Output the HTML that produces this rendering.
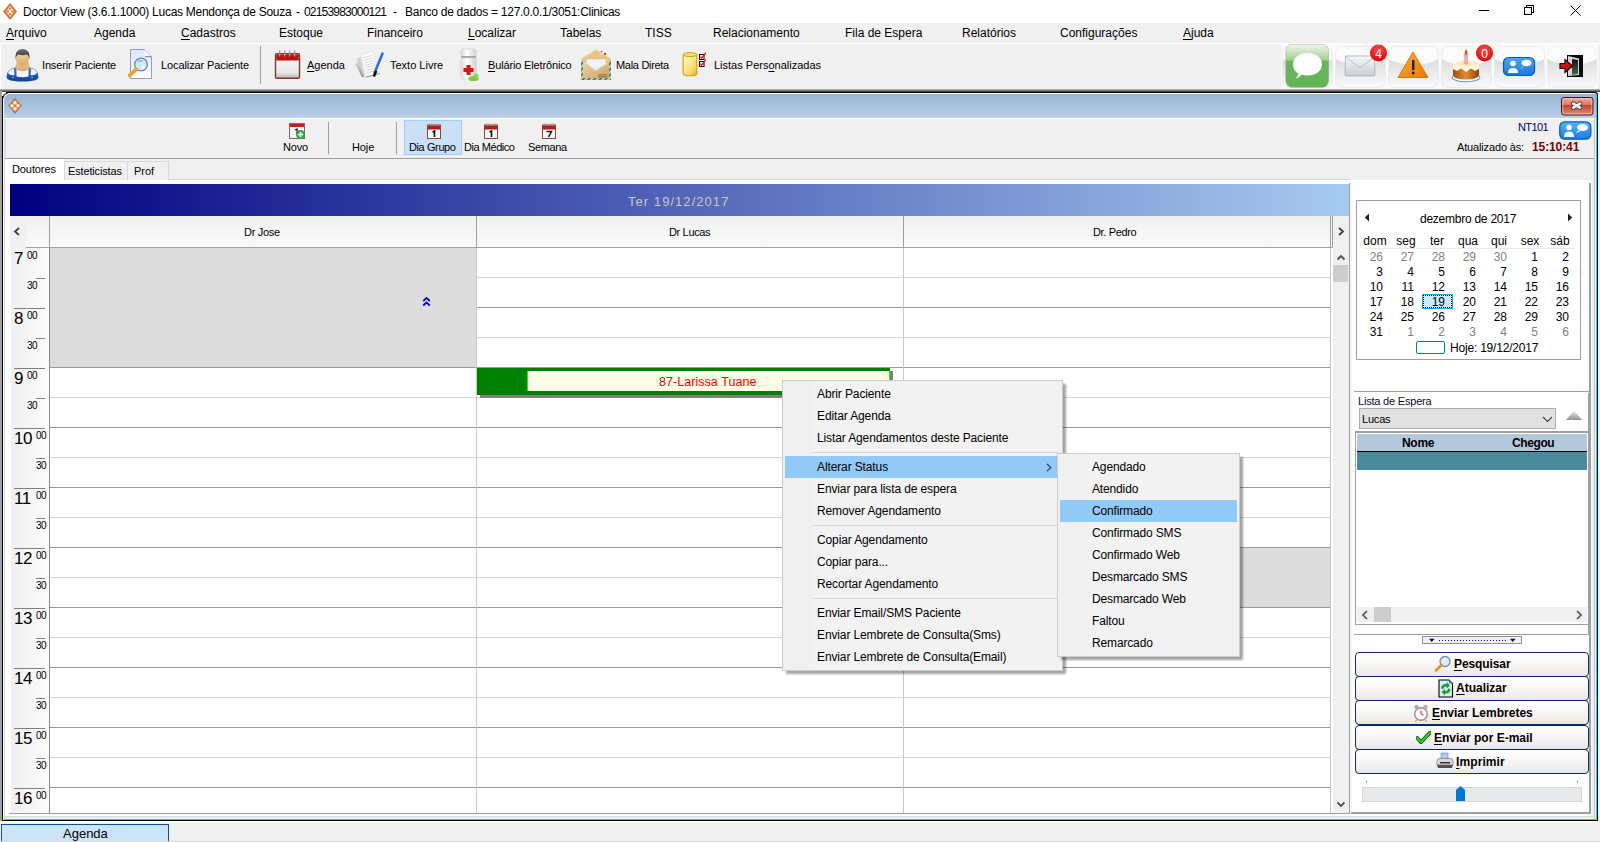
<!DOCTYPE html>
<html><head><meta charset="utf-8">
<style>
*{box-sizing:border-box}
html,body{margin:0;padding:0}
body{width:1600px;height:842px;overflow:hidden;position:relative;background:#f0f0f0;font-family:"Liberation Sans",sans-serif;font-size:12px;color:#000}
.a{position:absolute}
.t{position:absolute;white-space:pre;line-height:1}
u{text-decoration:underline;text-underline-offset:2px;text-decoration-thickness:1px}
</style></head><body>

<!-- TITLE BAR -->
<div class="a" style="left:0;top:0;width:1600px;height:23px;background:#fff"></div>
<svg class="a" style="left:3px;top:3px" width="14" height="17" viewBox="0 0 14 17">
<path d="M7 0.5 L13.5 8.5 L7 16.5 L0.5 8.5Z" fill="#e87722" stroke="#8a4a7a" stroke-width="0.6"/>
<path d="M7 3 L11 8.5 L7 14 L3 8.5Z" fill="#fff"/>
<circle cx="7" cy="5.8" r="1.2" fill="#e87722"/><circle cx="7" cy="11.2" r="1.2" fill="#e87722"/>
<circle cx="4.8" cy="8.5" r="1.2" fill="#e87722"/><circle cx="9.2" cy="8.5" r="1.2" fill="#e87722"/>
</svg>
<div class="t" style="left:23px;top:6px;font-size:12px;letter-spacing:-0.27px">Doctor View (3.6.1.1000) Lucas Mendonça de Souza</div>
<div class="t" style="left:296px;top:6px;font-size:12px">-</div>
<div class="t" style="left:304px;top:6px;font-size:12px;letter-spacing:-0.8px">02153983000121</div>
<div class="t" style="left:393px;top:6px;font-size:12px">-</div>
<div class="t" style="left:405px;top:6px;font-size:12px;letter-spacing:-0.27px">Banco de dados = 127.0.0.1/3051:Clinicas</div>
<div class="a" style="left:1479px;top:10px;width:10px;height:1px;background:#000"></div>
<div class="a" style="left:1526px;top:5px;width:8px;height:8px;border:1px solid #000"></div>
<div class="a" style="left:1524px;top:7px;width:8px;height:8px;border:1px solid #000;background:#fff"></div>
<svg class="a" style="left:1570px;top:5px" width="11" height="11"><path d="M0.5 0.5L10.5 10.5M10.5 0.5L0.5 10.5" stroke="#000" stroke-width="1"/></svg>

<!-- MENU BAR -->
<div class="a" style="left:0;top:23px;width:1600px;height:20px;background:#f0f0f0"></div>
<div class="t" style="left:6px;top:27px"><u>A</u>rquivo</div>
<div class="t" style="left:94px;top:27px">Agenda</div>
<div class="t" style="left:181px;top:27px"><u>C</u>adastros</div>
<div class="t" style="left:279px;top:27px">Estoque</div>
<div class="t" style="left:367px;top:27px">Financeiro</div>
<div class="t" style="left:468px;top:27px"><u>L</u>ocalizar</div>
<div class="t" style="left:560px;top:27px">Tabelas</div>
<div class="t" style="left:645px;top:27px">TISS</div>
<div class="t" style="left:713px;top:27px">Relacionamento</div>
<div class="t" style="left:845px;top:27px">Fila de Espera</div>
<div class="t" style="left:962px;top:27px">Relatórios</div>
<div class="t" style="left:1060px;top:27px">Configurações</div>
<div class="t" style="left:1183px;top:27px"><u>A</u>juda</div>

<!-- TOOLBAR -->
<div class="a" style="left:0;top:43px;width:1600px;height:1px;background:#fff"></div>
<div class="a" style="left:0;top:44px;width:1600px;height:45px;background:#f0f0f0;border-left:1px solid #fcfcfc"></div>

<!-- person icon -->
<svg class="a" style="left:6px;top:49px" width="33" height="33" viewBox="0 0 33 33">
<defs><linearGradient id="skin" x1="0" y1="0" x2="0" y2="1"><stop offset="0" stop-color="#f3d3a8"/><stop offset="1" stop-color="#d9a56c"/></linearGradient>
<linearGradient id="hair" x1="0" y1="0" x2="0" y2="1"><stop offset="0" stop-color="#707070"/><stop offset="1" stop-color="#202020"/></linearGradient>
<linearGradient id="blu" x1="0" y1="0" x2="0" y2="1"><stop offset="0" stop-color="#3a7be0"/><stop offset="1" stop-color="#0b3f9a"/></linearGradient></defs>
<path d="M0.5 28 Q0.5 20 9 18.5 L24 18.5 Q32.5 20 32.5 28 Q32.5 32.5 16.5 32.5 Q0.5 32.5 0.5 28Z" fill="url(#blu)"/>
<path d="M2 24 Q3 20 8 19.5 L8.5 26 Q4.5 27 2 24Z" fill="#f0f4fa"/>
<path d="M31 24 Q30 20 25 19.5 L24.5 26 Q28.5 27 31 24Z" fill="#f0f4fa"/>
<path d="M10.5 19 L22.5 19 L22.5 27.5 Q16.5 29 10.5 27.5Z" fill="#f8f8f8"/>
<circle cx="7" cy="28.5" r="0.9" fill="#6a9ae8"/><circle cx="26" cy="28.5" r="0.9" fill="#6a9ae8"/>
<path d="M11.5 13 L21.5 13 L23.5 19.5 Q16.5 24 9.5 19.5Z" fill="url(#skin)" stroke="#d89a30" stroke-width="0.7"/>
<ellipse cx="16.5" cy="10" rx="6.6" ry="7.6" fill="url(#skin)"/>
<path d="M9.5 11 Q8.5 0 16.5 0 Q24.5 0 23.5 11 Q23 6 20.5 5.5 Q16.5 7 12.5 5.5 Q10 6 9.5 11Z" fill="url(#hair)"/>
</svg>
<div class="t" style="left:42px;top:60px;font-size:11px;letter-spacing:-0.15px">Inserir Paciente</div>
<!-- magnifier doc -->
<svg class="a" style="left:126px;top:48px" width="28" height="33" viewBox="0 0 28 33">
<defs><linearGradient id="pg" x1="0" y1="0" x2="0" y2="1"><stop offset="0" stop-color="#d4e8fc"/><stop offset="0.6" stop-color="#f0f6fe"/><stop offset="1" stop-color="#ffffff"/></linearGradient></defs>
<path d="M4.5 1.5 L18.5 1.5 L25.5 8.5 L25.5 30.5 L4.5 30.5Z" fill="url(#pg)" stroke="#9a98c8" stroke-width="1"/>
<path d="M18.5 1.5 L18.5 8.5 L25.5 8.5Z" fill="#f8f8fc"/>
<path d="M19 8.6 L25.2 8.6" stroke="#8a9aa0" stroke-width="1.2"/>
<circle cx="15" cy="16.5" r="6.3" fill="#c8ecfa" stroke="#7c7cb0" stroke-width="1.3"/>
<path d="M12 14 Q14 12.2 16.5 13" stroke="#7ab0e8" stroke-width="1.4" fill="none"/>
<circle cx="17.5" cy="19" r="2" fill="#f4fcff"/>
<path d="M10.3 21.2 L3.8 27.4" stroke="#f0a030" stroke-width="3.8" stroke-linecap="round"/>
</svg>
<div class="t" style="left:161px;top:60px;font-size:11px;letter-spacing:-0.1px">Localizar Paciente</div>
<div class="a" style="left:260px;top:46px;width:1px;height:38px;background:#a0a0a0"></div>
<!-- calendar -->
<svg class="a" style="left:274px;top:50px" width="27" height="30" viewBox="0 0 27 30">
<defs><linearGradient id="cp" x1="0" y1="0" x2="0" y2="1"><stop offset="0" stop-color="#fafafa"/><stop offset="0.8" stop-color="#e6e6e6"/><stop offset="1" stop-color="#bcbcbc"/></linearGradient></defs>
<rect x="0.8" y="3" width="25.4" height="26" rx="2" fill="#7a3e1e"/>
<rect x="2.2" y="4.5" width="22.6" height="23" fill="url(#cp)"/>
<rect x="2.2" y="4.5" width="22.6" height="6" fill="#b81414"/>
<rect x="5" y="0.5" width="1.3" height="6" fill="#999"/><rect x="10" y="0.5" width="1.3" height="6" fill="#999"/><rect x="15" y="0.5" width="1.3" height="6" fill="#999"/><rect x="20" y="0.5" width="1.3" height="6" fill="#999"/>
</svg>
<div class="t" style="left:307px;top:60px;font-size:11px"><u>A</u>genda</div>
<!-- texto livre -->
<svg class="a" style="left:354px;top:49px" width="32" height="30" viewBox="0 0 32 30">
<defs><linearGradient id="pgs" x1="0" y1="0" x2="1" y2="1"><stop offset="0" stop-color="#e8e8e8"/><stop offset="1" stop-color="#606060"/></linearGradient></defs>
<path d="M1 15 L7 10 L14 28 L8 28Z" fill="url(#pgs)" opacity="0.8"/>
<path d="M3 10 L10 6 L17 28 L10 28Z" fill="#d0d0d0"/>
<path d="M6 6 L19 2 L24 25 L11 28.5Z" fill="#fafafa" stroke="#d8d8d8" stroke-width="0.5"/>
<path d="M7 7 L11.5 28" stroke="#f0c8b8" stroke-width="0.5"/>
<path d="M9 9 L18 6.5 M9.6 11.5 L18.6 9 M10.2 14 L19.2 11.5 M10.8 16.5 L19.8 14 M11.4 19 L20.4 16.5 M12 21.5 L21 19 M12.6 24 L21.6 21.5" stroke="#c8c8c8" stroke-width="0.6"/>
<path d="M12 28 L26 24.5" stroke="#404040" stroke-width="1.2" opacity="0.5"/>
<path d="M28.5 4.5 L20.5 24" stroke="#3070e0" stroke-width="2.6" stroke-linecap="round"/>
<path d="M22.3 22 L19.8 27.5" stroke="#101010" stroke-width="2.4"/>
</svg>
<div class="t" style="left:390px;top:60px;font-size:11px">Texto Livre</div>
<!-- bottle -->
<svg class="a" style="left:458px;top:48px" width="22" height="34" viewBox="0 0 22 34">
<defs><linearGradient id="bt" x1="0" y1="0" x2="1" y2="0"><stop offset="0" stop-color="#d8d8d8"/><stop offset="0.4" stop-color="#ffffff"/><stop offset="1" stop-color="#d0d0d0"/></linearGradient></defs>
<rect x="3" y="1" width="15" height="8" rx="2" fill="url(#bt)" stroke="#cfcfcf" stroke-width="0.6"/>
<rect x="3" y="8" width="15" height="2" fill="#9aa8b0"/>
<rect x="2.5" y="10" width="16" height="21" rx="2" fill="url(#bt)" stroke="#d8d8d8" stroke-width="0.6"/>
<path d="M8.5 17 H12.5 V20 H15.5 V24 H12.5 V27 H8.5 V24 H5.5 V20 H8.5Z" fill="#e01010"/>
<ellipse cx="15.5" cy="30.5" rx="5" ry="2.6" fill="#7ac83c"/><ellipse cx="18" cy="28" rx="2.5" ry="2.5" fill="#8ad84a"/>
</svg>
<div class="t" style="left:488px;top:60px;font-size:11px;letter-spacing:-0.15px"><u>B</u>ulário Eletrônico</div>
<!-- envelope -->
<svg class="a" style="left:580px;top:47px" width="32" height="34" viewBox="0 0 32 34">
<defs><linearGradient id="ev" x1="0" y1="0" x2="1" y2="1"><stop offset="0" stop-color="#f4d49a"/><stop offset="1" stop-color="#c8a26a"/></linearGradient>
<pattern id="air" width="4" height="4" patternUnits="userSpaceOnUse" patternTransform="rotate(45)"><rect width="2" height="4" fill="#2a8a98"/><rect x="2" width="2" height="4" fill="#f0c890"/></pattern></defs>
<path d="M1 12 L16 3 L31 12 L31 16 L1 16Z" fill="#e6c48a"/>
<path d="M1.5 11.5 L16 2.5 L30.5 11.5" stroke="#f0d8b0" stroke-width="1.6" stroke-dasharray="1.5 1" fill="none"/>
<circle cx="21.5" cy="4.5" r="0.8" fill="#ff00ff"/><circle cx="25" cy="7" r="0.9" fill="#502010"/><circle cx="27.5" cy="9" r="0.7" fill="#ffff00"/>
<path d="M6 12 L26 12 L26 16.5 L16 23.5 L6 16.5Z" fill="#f4f2ee" stroke="#b8b0a8" stroke-width="0.5"/>
<path d="M1 14 L16 24.5 L31 14 L31 33 L1 33Z" fill="url(#air)"/>
<path d="M3 15.5 L16 24.5 L29 15.5 L29 31 L3 31Z" fill="url(#ev)"/>
<path d="M18 27.8 H27 M18 29.8 H27" stroke="#7a5a30" stroke-width="0.8"/>
</svg>
<div class="t" style="left:616px;top:60px;font-size:11px;letter-spacing:-0.3px">Mala Direta</div>
<!-- cylinder -->
<svg class="a" style="left:682px;top:51px" width="26" height="27" viewBox="0 0 26 27">
<defs><linearGradient id="cy" x1="0" y1="0" x2="1" y2="1"><stop offset="0" stop-color="#fff8d0"/><stop offset="0.3" stop-color="#fff0a0"/><stop offset="0.7" stop-color="#f4d860"/><stop offset="1" stop-color="#e0b030"/></linearGradient></defs>
<path d="M1.2 4 L1.2 22.5 Q1.2 24.8 8 24.8 Q14.8 24.8 14.8 22.5 L14.8 4Z" fill="url(#cy)" stroke="#d4a000" stroke-width="1.1"/>
<ellipse cx="8" cy="3.6" rx="6.8" ry="2" fill="#f8e070" stroke="#d4a000" stroke-width="1"/>
<rect x="17.5" y="3.5" width="4.5" height="5" fill="#fff" stroke="#000" stroke-width="1"/>
<rect x="17.5" y="10.5" width="4.5" height="5" fill="#fff" stroke="#000" stroke-width="1"/>
<path d="M18.3 5.6 L19.6 7.2 L23.8 1.6 M18.3 12.6 L19.6 14.2 L23.8 8.6" stroke="#f01010" stroke-width="1.3" fill="none"/>
</svg>
<div class="t" style="left:714px;top:60px;font-size:11px">Listas Pers<u>o</u>nalizadas</div>

<!-- right toolbar panel -->
<div class="a" style="left:1281px;top:44px;width:317px;height:45px;background:#fafafa"></div>

<svg class="a" style="left:1281px;top:44px" width="317" height="45" viewBox="0 0 317 45">
<defs>
<linearGradient id="gl" x1="0" y1="0" x2="0" y2="1"><stop offset="0" stop-color="#ffffff"/><stop offset="0.3" stop-color="#fafafa"/><stop offset="0.36" stop-color="#e4e4e4"/><stop offset="0.6" stop-color="#ececec"/><stop offset="1" stop-color="#fafafa"/></linearGradient>
<linearGradient id="grn" x1="0" y1="0" x2="0" y2="1"><stop offset="0" stop-color="#f0f6ec"/><stop offset="0.36" stop-color="#a0d090"/><stop offset="0.39" stop-color="#68b65c"/><stop offset="1" stop-color="#62b456"/></linearGradient>
<linearGradient id="env2" x1="0" y1="0" x2="0" y2="1"><stop offset="0" stop-color="#f8f8fa"/><stop offset="1" stop-color="#c8ccd4"/></linearGradient>
<linearGradient id="warn" x1="0" y1="0" x2="1" y2="1"><stop offset="0" stop-color="#f8b040"/><stop offset="1" stop-color="#e87800"/></linearGradient>
<linearGradient id="cake" x1="0" y1="0" x2="1" y2="0"><stop offset="0" stop-color="#a05010"/><stop offset="0.5" stop-color="#e09030"/><stop offset="1" stop-color="#904010"/></linearGradient>
<linearGradient id="chat" x1="0" y1="0" x2="0" y2="1"><stop offset="0" stop-color="#4aa8f8"/><stop offset="1" stop-color="#1878e0"/></linearGradient>
<linearGradient id="door" x1="0" y1="0" x2="0" y2="1"><stop offset="0" stop-color="#101010"/><stop offset="1" stop-color="#4a6a50"/></linearGradient>
<linearGradient id="wv" x1="0" y1="0" x2="0" y2="1"><stop offset="0" stop-color="#dcdcdc"/><stop offset="0.7" stop-color="#f2f2f2"/><stop offset="1" stop-color="#f8f8f8"/></linearGradient>
<clipPath id="bc0"><rect x="1" y="2" width="51" height="42" rx="7"/></clipPath>
<clipPath id="bc1"><rect x="54" y="2" width="51" height="42" rx="7"/></clipPath>
<clipPath id="bc2"><rect x="107" y="2" width="51" height="42" rx="7"/></clipPath>
<clipPath id="bc3"><rect x="160" y="2" width="51" height="42" rx="7"/></clipPath>
<clipPath id="bc4"><rect x="213" y="2" width="51" height="42" rx="7"/></clipPath>
<clipPath id="bc5"><rect x="266" y="2" width="50" height="42" rx="7"/></clipPath>
<radialGradient id="badge" cx="0.5" cy="0.3" r="0.7"><stop offset="0" stop-color="#ff5050"/><stop offset="1" stop-color="#e00000"/></radialGradient>
</defs>
<rect x="1" y="2" width="51" height="42" rx="7" fill="#fbfbfb"/>
<path clip-path="url(#bc0)" d="M1 15 Q26.5 27 52 15 L52 44 L1 44Z" fill="url(#wv)"/>
<rect x="1.5" y="2.5" width="50" height="41" rx="7" fill="none" stroke="#ebebeb"/>
<rect x="54" y="2" width="51" height="42" rx="7" fill="#fbfbfb"/>
<path clip-path="url(#bc1)" d="M54 15 Q79.5 27 105 15 L105 44 L54 44Z" fill="url(#wv)"/>
<rect x="54.5" y="2.5" width="50" height="41" rx="7" fill="none" stroke="#ebebeb"/>
<rect x="107" y="2" width="51" height="42" rx="7" fill="#fbfbfb"/>
<path clip-path="url(#bc2)" d="M107 15 Q132.5 27 158 15 L158 44 L107 44Z" fill="url(#wv)"/>
<rect x="107.5" y="2.5" width="50" height="41" rx="7" fill="none" stroke="#ebebeb"/>
<rect x="160" y="2" width="51" height="42" rx="7" fill="#fbfbfb"/>
<path clip-path="url(#bc3)" d="M160 15 Q185.5 27 211 15 L211 44 L160 44Z" fill="url(#wv)"/>
<rect x="160.5" y="2.5" width="50" height="41" rx="7" fill="none" stroke="#ebebeb"/>
<rect x="213" y="2" width="51" height="42" rx="7" fill="#fbfbfb"/>
<path clip-path="url(#bc4)" d="M213 15 Q238.5 27 264 15 L264 44 L213 44Z" fill="url(#wv)"/>
<rect x="213.5" y="2.5" width="50" height="41" rx="7" fill="none" stroke="#ebebeb"/>
<rect x="266" y="2" width="50" height="42" rx="7" fill="#fbfbfb"/>
<path clip-path="url(#bc5)" d="M266 15 Q291.0 27 316 15 L316 44 L266 44Z" fill="url(#wv)"/>
<rect x="266.5" y="2.5" width="49" height="41" rx="7" fill="none" stroke="#ebebeb" stroke-dasharray="1 1"/>
<!-- green messages -->
<rect x="4.8" y="0.5" width="42.8" height="42.8" rx="6.5" fill="url(#grn)" stroke="#8a9a8a" stroke-width="0.4"/>
<path d="M26.5 9 C34.5 9 41 13.5 41 20.5 C41 27 34.5 31.5 26.5 31.5 C24.5 31.5 22.5 31.2 21 30.8 C19 32.5 17 34 14.5 35 C16 33.5 16.8 31.5 17 29.5 C13.8 27.5 12 24.3 12 20.5 C12 13.5 18.5 9 26.5 9Z" fill="#fff"/>
<!-- mail -->
<path d="M64.5 12 L93.5 12 L94 30 Q94 32 92 32 L66 32 Q64 32 64 30Z" fill="url(#env2)" stroke="#a8acb4" stroke-width="0.8"/>
<path d="M64.5 12.5 L79 24 L93.5 12.5" fill="none" stroke="#b8bcc4" stroke-width="1"/>
<path d="M64.5 31.5 L75 22 M93.5 31.5 L83 22" stroke="#d4d8de" stroke-width="0.8"/>
<circle cx="97.5" cy="9" r="8.5" fill="url(#badge)"/>
<text x="97.5" y="13.5" font-family="Liberation Sans" font-size="12" fill="#fff" text-anchor="middle">4</text>
<!-- warning -->
<path d="M132 8 L147 33.5 L117 33.5Z" fill="url(#warn)" stroke="#e07800" stroke-width="1" stroke-linejoin="round"/>
<rect x="131" y="16" width="2.4" height="10" fill="#222"/><circle cx="132.2" cy="29" r="1.4" fill="#111"/>
<!-- cake -->
<ellipse cx="185" cy="33.5" rx="13.8" ry="4.2" fill="#fff" stroke="#5a9ae0" stroke-width="1.1"/>
<path d="M172 21 L172 30.5 Q172 35.5 185 35.5 Q198 35.5 198 30.5 L198 21Z" fill="url(#cake)"/>
<path d="M172 21 Q172 16 185 16 Q198 16 198 21 L198 25 L194 27 L190 24.5 L185 28 L180 24.5 L176 27 L172 25Z" fill="#fff4dc"/>
<ellipse cx="185" cy="19.5" rx="10" ry="2.8" fill="#ffe8b8"/>
<rect x="183.8" y="10" width="2.6" height="10" fill="#f0a8b8" stroke="#d07080" stroke-width="0.4"/>
<path d="M185.1 5 Q188 9 185.1 11.5 Q182.2 9 185.1 5Z" fill="#f05010"/>
<circle cx="203.5" cy="9" r="8.5" fill="url(#badge)"/>
<text x="203.5" y="13.5" font-family="Liberation Sans" font-size="12" fill="#fff" text-anchor="middle">0</text>
<!-- chat -->
<rect x="222.5" y="13.5" width="31" height="18" rx="5" fill="url(#chat)" stroke="#0a58c8" stroke-width="1.2"/>
<circle cx="232" cy="19.5" r="2.8" fill="#fff"/><path d="M227 29 Q227 24 232 24 Q237 24 237 29Z" fill="#fff"/>
<ellipse cx="245.5" cy="19" rx="5" ry="3.2" fill="#fff"/><path d="M241 23 L239 25.5 L243 22Z" fill="#fff"/>
<!-- exit -->
<rect x="286" y="11" width="16" height="22" fill="#0a0a0a"/>
<path d="M287 12 L298 14.5 L298 31 L287 32Z" fill="#d8d8d8"/>
<path d="M291 15 L297 16 L297 30 L291 31Z" fill="url(#door)"/>
<path d="M279 19.5 L284 19.5 L284 15.5 L291.5 22 L284 28.5 L284 24.5 L279 24.5Z" fill="#d01010" stroke="#101010" stroke-width="1.2"/>
</svg>



<!-- dark separator -->
<div class="a" style="left:0;top:89px;width:1600px;height:3px;background:linear-gradient(#c8c8c8,#787878,#2a2a2a)"></div>

<!-- MDI CHILD -->
<div class="a" style="left:0;top:91px;width:2px;height:730px;background:#a0a0a0"></div>
<div class="a" style="left:2px;top:92px;width:1596px;height:729px;background:#000;border-radius:3px 3px 0 0"></div>
<div class="a" style="left:3px;top:93px;width:1594px;height:727px;background:#2cc4f0;border-left:1px solid #fff;border-top:1px solid #fff;border-radius:3px 3px 0 0"></div>
<div class="a" style="left:4px;top:94px;width:1592px;height:24px;background:linear-gradient(#98b3d1,#b8d0e9)"></div>
<div class="a" style="left:4px;top:118px;width:1592px;height:701px;background:#f0f0f0;border-left:1px solid #c4daf2;border-top:1px solid #fff"></div>
<div class="a" style="left:5px;top:119px;width:1px;height:700px;background:#e2e2e2"></div>
<div class="a" style="left:1594px;top:118px;width:1px;height:701px;background:#c8c8c8"></div>
<div class="a" style="left:2px;top:92px;width:4px;height:4px;background:#fff"></div>
<svg class="a" style="left:2px;top:92px" width="6" height="6"><path d="M1.2 6 Q1.2 2 5.5 1.2" stroke="#222" stroke-width="1.1" fill="none"/><path d="M2.4 6 Q2.6 3 6 2.4" stroke="#fff" stroke-width="0.8" fill="none"/></svg>
<!-- child icon -->
<svg class="a" style="left:8px;top:98px" width="14" height="16" viewBox="0 0 14 16">
<path d="M7 0.3 L13.3 7.8 L7 15.5 L0.7 7.8Z" fill="#f07a1a" stroke="#7a4a8a" stroke-width="0.5"/>
<circle cx="7" cy="4.8" r="1.7" fill="#fff"/><circle cx="7" cy="10.8" r="1.7" fill="#fff"/>
<circle cx="4" cy="7.8" r="1.7" fill="#fff"/><circle cx="10" cy="7.8" r="1.7" fill="#fff"/>
</svg>
<!-- close button -->
<svg class="a" style="left:1561px;top:97px" width="33" height="19" viewBox="0 0 33 19">
<defs><linearGradient id="cb" x1="0" y1="0" x2="0" y2="1"><stop offset="0" stop-color="#f0b0a0"/><stop offset="0.42" stop-color="#d87866"/><stop offset="0.45" stop-color="#c04428"/><stop offset="1" stop-color="#e0907a"/></linearGradient></defs>
<rect x="0.5" y="0.5" width="31.5" height="17.5" rx="2.5" fill="url(#cb)" stroke="#4a1020" stroke-width="1"/>
<rect x="1.8" y="1.8" width="29" height="15" rx="1.5" fill="none" stroke="#ffd0c0" stroke-width="0.8" opacity="0.8"/>
<path d="M12.3 6.6 L18.9 10.6 M18.9 6.6 L12.3 10.6" stroke="#3a4050" stroke-width="4.6" stroke-linecap="round"/>
<path d="M12.3 6.6 L18.9 10.6 M18.9 6.6 L12.3 10.6" stroke="#f4f4f4" stroke-width="2.8" stroke-linecap="round"/>
</svg>

<!-- child toolbar -->
<div class="a" style="left:5px;top:158px;width:1589px;height:1px;background:#a0a0a0"></div>
<svg class="a" style="left:289px;top:123px" width="17" height="17" viewBox="0 0 17 17">
<rect x="0.5" y="0.5" width="15" height="15" fill="#f4f4f4" stroke="#707070"/>
<rect x="1" y="1" width="14" height="4" fill="#d01818"/><rect x="1" y="4" width="14" height="1" fill="#f8f8f8"/>
<path d="M6 7 L8 6 L8 11" stroke="#202020" stroke-width="1.3" fill="none"/>
<circle cx="11.5" cy="11.5" r="4.5" fill="#28a838"/>
<path d="M11.5 8.8 V14.2 M8.8 11.5 H14.2" stroke="#fff" stroke-width="1.6"/>
</svg>
<div class="t" style="left:283px;top:142px;font-size:11px;letter-spacing:-0.2px">Novo</div>
<div class="a" style="left:328px;top:122px;width:1px;height:32px;background:#a0a0a0"></div>
<div class="t" style="left:352px;top:142px;font-size:11px;letter-spacing:-0.1px">Hoje</div>
<div class="a" style="left:396px;top:122px;width:1px;height:32px;background:#a0a0a0"></div>
<div class="a" style="left:404px;top:120px;width:58px;height:35px;background:#c9e0f7;border:1px solid #99d1ff"></div>
<svg class="a" style="left:427px;top:123px" width="14" height="16" viewBox="0 0 14 16">
<rect x="0.5" y="2" width="13" height="13.5" fill="#f8f8f8" stroke="#8a4a2a"/>
<rect x="1" y="2.5" width="12" height="4" fill="#b81818"/>
<path d="M2.5 0.5V3 M5 0.5V3 M9 0.5V3 M11.5 0.5V3" stroke="#888" stroke-width="0.8"/>
<path d="M5.5 9 L7.5 8 L7.5 14" stroke="#101010" stroke-width="1.6" fill="none"/>
</svg>
<div class="t" style="left:409px;top:142px;font-size:11px;letter-spacing:-0.4px">Dia Grupo</div>
<svg class="a" style="left:484px;top:123px" width="14" height="16" viewBox="0 0 14 16">
<rect x="0.5" y="2" width="13" height="13.5" fill="#f8f8f8" stroke="#8a4a2a"/>
<rect x="1" y="2.5" width="12" height="4" fill="#b81818"/>
<path d="M2.5 0.5V3 M5 0.5V3 M9 0.5V3 M11.5 0.5V3" stroke="#888" stroke-width="0.8"/>
<path d="M5.5 9 L7.5 8 L7.5 14" stroke="#101010" stroke-width="1.6" fill="none"/>
</svg>
<div class="t" style="left:464px;top:142px;font-size:11px;letter-spacing:-0.45px">Dia Médico</div>
<svg class="a" style="left:542px;top:123px" width="14" height="16" viewBox="0 0 14 16">
<rect x="0.5" y="2" width="13" height="13.5" fill="#f8f8f8" stroke="#8a4a2a"/>
<rect x="1" y="2.5" width="12" height="4" fill="#b81818"/>
<path d="M2.5 0.5V3 M5 0.5V3 M9 0.5V3 M11.5 0.5V3" stroke="#888" stroke-width="0.8"/>
<path d="M4.5 8.5 H9.5 L6.5 14" stroke="#101010" stroke-width="1.5" fill="none"/>
</svg>
<div class="t" style="left:528px;top:142px;font-size:11px;letter-spacing:-0.35px">Semana</div>

<div class="t" style="left:1518px;top:122px;font-size:11px;color:#000080;letter-spacing:-0.6px">NT101</div>
<svg class="a" style="left:1559px;top:121px" width="33" height="19" viewBox="0 0 33 19">
<defs><linearGradient id="chat2" x1="0" y1="0" x2="0" y2="1"><stop offset="0" stop-color="#5ab4fa"/><stop offset="1" stop-color="#1a7ae8"/></linearGradient></defs>
<rect x="0.8" y="0.8" width="31" height="17.4" rx="5" fill="url(#chat2)" stroke="#0a5ad0" stroke-width="1.3"/>
<circle cx="10" cy="6.5" r="2.8" fill="#fff"/><path d="M5 16 Q5 10.5 10 10.5 Q15 10.5 15 16Z" fill="#fff"/>
<ellipse cx="23.5" cy="6.5" rx="5.5" ry="3.5" fill="#fff"/><path d="M19 9.5 L17 12.5 L21.5 9.8Z" fill="#fff"/>
</svg>
<div class="t" style="left:1457px;top:142px;font-size:11px;letter-spacing:-0.15px">Atualizado às:</div>
<div class="t" style="left:1532px;top:141px;font-size:12px;font-weight:bold;color:#800000;letter-spacing:-0.1px">15:10:41</div>

<!-- tabs -->
<div class="a" style="left:5px;top:179px;width:1345px;height:1px;background:#d9d9d9"></div>
<div class="a" style="left:5px;top:159px;width:59px;height:21px;background:#fff"></div>
<div class="t" style="left:12px;top:164px;font-size:11px;letter-spacing:-0.1px">Doutores</div>
<div class="a" style="left:64px;top:161px;width:64px;height:19px;background:#f0f0f0;border:1px solid #d9d9d9;border-bottom:none"></div>
<div class="t" style="left:68px;top:166px;font-size:11px;letter-spacing:-0.15px">Esteticistas</div>
<div class="a" style="left:128px;top:161px;width:41px;height:19px;background:#f0f0f0;border:1px solid #d9d9d9;border-left:none;border-bottom:none"></div>
<div class="t" style="left:134px;top:166px;font-size:11px">Prof</div>

<div class="a" style="left:5px;top:180px;width:1587px;height:636px;background:#fff"></div>
<div class="a" style="left:5px;top:816px;width:1590px;height:1px;background:#d8d8d8"></div>
<div class="a" style="left:10px;top:184px;width:1339px;height:32px;background:linear-gradient(90deg,#000080,#a6caf0)"></div>
<div class="t" style="left:628px;top:195px;font-size:13px;color:#c8c8c8;letter-spacing:1.05px">Ter 19/12/2017</div>
<div class="a" style="left:10px;top:216px;width:16px;height:32px;background:#f0f0f0"></div>
<svg class="a" style="left:13px;top:227px" width="8" height="9"><path d="M6 1 L2 4.5 L6 8" stroke="#404040" stroke-width="1.8" fill="none"/></svg>
<div class="a" style="left:26px;top:216px;width:1307px;height:31px;background:linear-gradient(#f0f0f0,#fafafa)"></div>
<div class="a" style="left:26px;top:247px;width:1307px;height:1px;background:#a0a0a0"></div>
<div class="a" style="left:49px;top:216px;width:1px;height:31px;background:#a0a0a0"></div>
<div class="a" style="left:476px;top:216px;width:1px;height:31px;background:#a0a0a0"></div>
<div class="a" style="left:903px;top:216px;width:1px;height:31px;background:#a0a0a0"></div>
<div class="a" style="left:1330px;top:216px;width:1px;height:31px;background:#a0a0a0"></div>
<div class="a" style="left:1332px;top:216px;width:1px;height:31px;background:#a0a0a0"></div>
<div class="t" style="left:244px;top:227px;font-size:11px;letter-spacing:-0.3px">Dr Jose</div>
<div class="t" style="left:669px;top:227px;font-size:11px;letter-spacing:-0.35px">Dr Lucas</div>
<div class="t" style="left:1093px;top:227px;font-size:11px;letter-spacing:-0.35px">Dr. Pedro</div>
<div class="a" style="left:1333px;top:216px;width:16px;height:597px;background:#f0f0f0"></div>
<svg class="a" style="left:1337px;top:227px" width="9" height="9"><path d="M2 1 L6 4.5 L2 8" stroke="#404040" stroke-width="1.8" fill="none"/></svg>
<svg class="a" style="left:1336px;top:253px" width="10" height="8"><path d="M1.5 6.5 L5 3 L8.5 6.5" stroke="#505050" stroke-width="1.8" fill="none"/></svg>
<div class="a" style="left:1333px;top:265px;width:15px;height:17px;background:#cdcdcd"></div>
<svg class="a" style="left:1336px;top:801px" width="10" height="8"><path d="M1.5 1.5 L5 5 L8.5 1.5" stroke="#505050" stroke-width="1.8" fill="none"/></svg>
<div class="a" style="left:1349px;top:183px;width:1px;height:631px;background:#a0a0a0"></div>
<div class="a" style="left:11px;top:248px;width:38px;height:565px;background:linear-gradient(90deg,#f0f0f0,#fbfbfb)"></div>
<div class="a" style="left:49px;top:248px;width:1px;height:565px;background:#8c8c8c"></div>
<div class="a" style="left:50px;top:248px;width:1280px;height:565px;background:#fff"></div>
<div class="a" style="left:50px;top:248px;width:426px;height:119px;background:#dcdcdc"></div>
<div class="a" style="left:904px;top:548px;width:426px;height:59px;background:#dcdcdc"></div>
<div class="a" style="left:477px;top:277px;width:853px;height:1px;background:#d4d4d4"></div>
<div class="a" style="left:477px;top:307px;width:853px;height:1px;background:#989898"></div>
<div class="a" style="left:477px;top:337px;width:853px;height:1px;background:#d4d4d4"></div>
<div class="a" style="left:50px;top:367px;width:1280px;height:1px;background:#989898"></div>
<div class="a" style="left:50px;top:397px;width:1280px;height:1px;background:#d4d4d4"></div>
<div class="a" style="left:50px;top:427px;width:1280px;height:1px;background:#989898"></div>
<div class="a" style="left:50px;top:457px;width:1280px;height:1px;background:#d4d4d4"></div>
<div class="a" style="left:50px;top:487px;width:1280px;height:1px;background:#989898"></div>
<div class="a" style="left:50px;top:517px;width:1280px;height:1px;background:#d4d4d4"></div>
<div class="a" style="left:50px;top:547px;width:1280px;height:1px;background:#989898"></div>
<div class="a" style="left:50px;top:577px;width:854px;height:1px;background:#d4d4d4"></div>
<div class="a" style="left:50px;top:607px;width:1280px;height:1px;background:#989898"></div>
<div class="a" style="left:50px;top:637px;width:1280px;height:1px;background:#d4d4d4"></div>
<div class="a" style="left:50px;top:667px;width:1280px;height:1px;background:#989898"></div>
<div class="a" style="left:50px;top:697px;width:1280px;height:1px;background:#d4d4d4"></div>
<div class="a" style="left:50px;top:727px;width:1280px;height:1px;background:#989898"></div>
<div class="a" style="left:50px;top:757px;width:1280px;height:1px;background:#d4d4d4"></div>
<div class="a" style="left:50px;top:787px;width:1280px;height:1px;background:#989898"></div>
<div class="a" style="left:476px;top:248px;width:1px;height:565px;background:#c8c8c8"></div>
<div class="a" style="left:903px;top:248px;width:1px;height:565px;background:#c8c8c8"></div>
<div class="a" style="left:1330px;top:248px;width:1px;height:565px;background:#c8c8c8"></div>
<div class="a" style="left:9px;top:813px;width:1341px;height:1px;background:#a0a0a0"></div>
<div class="t" style="left:14px;top:250px;font-size:17px;letter-spacing:-0.4px">7</div>
<div class="t" style="left:27px;top:251px;font-size:10px;letter-spacing:-0.5px">00</div>
<div class="a" style="left:36px;top:278px;width:9px;height:1px;background:#808080"></div>
<div class="t" style="left:27px;top:281px;font-size:10px;letter-spacing:-0.5px">30</div>
<div class="t" style="left:14px;top:310px;font-size:17px;letter-spacing:-0.4px">8</div>
<div class="t" style="left:27px;top:311px;font-size:10px;letter-spacing:-0.5px">00</div>
<div class="a" style="left:14px;top:308px;width:31px;height:1px;background:#808080"></div>
<div class="a" style="left:36px;top:338px;width:9px;height:1px;background:#808080"></div>
<div class="t" style="left:27px;top:341px;font-size:10px;letter-spacing:-0.5px">30</div>
<div class="t" style="left:14px;top:370px;font-size:17px;letter-spacing:-0.4px">9</div>
<div class="t" style="left:27px;top:371px;font-size:10px;letter-spacing:-0.5px">00</div>
<div class="a" style="left:14px;top:368px;width:31px;height:1px;background:#808080"></div>
<div class="a" style="left:36px;top:398px;width:9px;height:1px;background:#808080"></div>
<div class="t" style="left:27px;top:401px;font-size:10px;letter-spacing:-0.5px">30</div>
<div class="t" style="left:14px;top:430px;font-size:17px;letter-spacing:-0.4px">10</div>
<div class="t" style="left:36px;top:431px;font-size:10px;letter-spacing:-0.5px">00</div>
<div class="a" style="left:14px;top:428px;width:31px;height:1px;background:#808080"></div>
<div class="a" style="left:36px;top:458px;width:9px;height:1px;background:#808080"></div>
<div class="t" style="left:36px;top:461px;font-size:10px;letter-spacing:-0.5px">30</div>
<div class="t" style="left:14px;top:490px;font-size:17px;letter-spacing:-0.4px">11</div>
<div class="t" style="left:36px;top:491px;font-size:10px;letter-spacing:-0.5px">00</div>
<div class="a" style="left:14px;top:488px;width:31px;height:1px;background:#808080"></div>
<div class="a" style="left:36px;top:518px;width:9px;height:1px;background:#808080"></div>
<div class="t" style="left:36px;top:521px;font-size:10px;letter-spacing:-0.5px">30</div>
<div class="t" style="left:14px;top:550px;font-size:17px;letter-spacing:-0.4px">12</div>
<div class="t" style="left:36px;top:551px;font-size:10px;letter-spacing:-0.5px">00</div>
<div class="a" style="left:14px;top:548px;width:31px;height:1px;background:#808080"></div>
<div class="a" style="left:36px;top:578px;width:9px;height:1px;background:#808080"></div>
<div class="t" style="left:36px;top:581px;font-size:10px;letter-spacing:-0.5px">30</div>
<div class="t" style="left:14px;top:610px;font-size:17px;letter-spacing:-0.4px">13</div>
<div class="t" style="left:36px;top:611px;font-size:10px;letter-spacing:-0.5px">00</div>
<div class="a" style="left:14px;top:608px;width:31px;height:1px;background:#808080"></div>
<div class="a" style="left:36px;top:638px;width:9px;height:1px;background:#808080"></div>
<div class="t" style="left:36px;top:641px;font-size:10px;letter-spacing:-0.5px">30</div>
<div class="t" style="left:14px;top:670px;font-size:17px;letter-spacing:-0.4px">14</div>
<div class="t" style="left:36px;top:671px;font-size:10px;letter-spacing:-0.5px">00</div>
<div class="a" style="left:14px;top:668px;width:31px;height:1px;background:#808080"></div>
<div class="a" style="left:36px;top:698px;width:9px;height:1px;background:#808080"></div>
<div class="t" style="left:36px;top:701px;font-size:10px;letter-spacing:-0.5px">30</div>
<div class="t" style="left:14px;top:730px;font-size:17px;letter-spacing:-0.4px">15</div>
<div class="t" style="left:36px;top:731px;font-size:10px;letter-spacing:-0.5px">00</div>
<div class="a" style="left:14px;top:728px;width:31px;height:1px;background:#808080"></div>
<div class="a" style="left:36px;top:758px;width:9px;height:1px;background:#808080"></div>
<div class="t" style="left:36px;top:761px;font-size:10px;letter-spacing:-0.5px">30</div>
<div class="t" style="left:14px;top:790px;font-size:17px;letter-spacing:-0.4px">16</div>
<div class="t" style="left:36px;top:791px;font-size:10px;letter-spacing:-0.5px">00</div>
<div class="a" style="left:14px;top:788px;width:31px;height:1px;background:#808080"></div>
<svg class="a" style="left:422px;top:296px" width="9" height="11"><path d="M1.2 5 L4.5 2 L7.8 5 M1.2 9.5 L4.5 6.5 L7.8 9.5" stroke="#0000e0" stroke-width="1.7" fill="none"/></svg>
<div class="a" style="left:480px;top:395px;width:413px;height:3px;background:#808080"></div>
<div class="a" style="left:890px;top:371px;width:3px;height:27px;background:#808080"></div>
<div class="a" style="left:477px;top:368px;width:413px;height:27px;background:#008000"></div>
<div class="a" style="left:527px;top:371px;width:363px;height:20px;background:#fffde6;border-left:1px solid #00ff00;border-right:1px solid #00ff00"></div>
<div class="t" style="left:659px;top:376px;font-size:12.5px;color:#ff0000;letter-spacing:0.05px">87-Larissa Tuane</div>
<div class="a" style="left:1350px;top:180px;width:242px;height:635px;background:#fff"></div>
<div class="a" style="left:1349px;top:183px;width:1px;height:631px;background:#a0a0a0"></div>
<div class="a" style="left:1350px;top:183px;width:2px;height:631px;background:#f6f6f6"></div>
<div class="a" style="left:1589px;top:183px;width:2px;height:631px;background:#a0a0a0"></div>
<div class="a" style="left:1356px;top:200px;width:225px;height:160px;border:1px solid #a0a0a0;background:#fff"></div>
<svg class="a" style="left:1364px;top:213px" width="6" height="9"><path d="M5 0.5 L0.8 4.5 L5 8.5Z" fill="#202020"/></svg>
<svg class="a" style="left:1567px;top:213px" width="6" height="9"><path d="M1 0.5 L5.2 4.5 L1 8.5Z" fill="#202020"/></svg>
<div class="t" style="left:1420px;top:213px;font-size:12px;letter-spacing:-0.25px">dezembro de 2017</div>
<div class="t" style="left:1355px;width:40px;text-align:center;top:235px;font-size:12px">dom</div>
<div class="t" style="left:1386px;width:40px;text-align:center;top:235px;font-size:12px">seg</div>
<div class="t" style="left:1417px;width:40px;text-align:center;top:235px;font-size:12px">ter</div>
<div class="t" style="left:1448px;width:40px;text-align:center;top:235px;font-size:12px">qua</div>
<div class="t" style="left:1479px;width:40px;text-align:center;top:235px;font-size:12px">qui</div>
<div class="t" style="left:1510px;width:40px;text-align:center;top:235px;font-size:12px">sex</div>
<div class="t" style="left:1540px;width:40px;text-align:center;top:235px;font-size:12px">sáb</div>
<div class="a" style="left:1364px;top:248px;width:210px;height:1px;background:#e8e8e8"></div>
<div class="t" style="left:1353px;width:30px;text-align:right;top:251px;font-size:12px;color:#808080">26</div>
<div class="t" style="left:1384px;width:30px;text-align:right;top:251px;font-size:12px;color:#808080">27</div>
<div class="t" style="left:1415px;width:30px;text-align:right;top:251px;font-size:12px;color:#808080">28</div>
<div class="t" style="left:1446px;width:30px;text-align:right;top:251px;font-size:12px;color:#808080">29</div>
<div class="t" style="left:1477px;width:30px;text-align:right;top:251px;font-size:12px;color:#808080">30</div>
<div class="t" style="left:1508px;width:30px;text-align:right;top:251px;font-size:12px;color:#000">1</div>
<div class="t" style="left:1539px;width:30px;text-align:right;top:251px;font-size:12px;color:#000">2</div>
<div class="t" style="left:1353px;width:30px;text-align:right;top:266px;font-size:12px;color:#000">3</div>
<div class="t" style="left:1384px;width:30px;text-align:right;top:266px;font-size:12px;color:#000">4</div>
<div class="t" style="left:1415px;width:30px;text-align:right;top:266px;font-size:12px;color:#000">5</div>
<div class="t" style="left:1446px;width:30px;text-align:right;top:266px;font-size:12px;color:#000">6</div>
<div class="t" style="left:1477px;width:30px;text-align:right;top:266px;font-size:12px;color:#000">7</div>
<div class="t" style="left:1508px;width:30px;text-align:right;top:266px;font-size:12px;color:#000">8</div>
<div class="t" style="left:1539px;width:30px;text-align:right;top:266px;font-size:12px;color:#000">9</div>
<div class="t" style="left:1353px;width:30px;text-align:right;top:281px;font-size:12px;color:#000">10</div>
<div class="t" style="left:1384px;width:30px;text-align:right;top:281px;font-size:12px;color:#000">11</div>
<div class="t" style="left:1415px;width:30px;text-align:right;top:281px;font-size:12px;color:#000">12</div>
<div class="t" style="left:1446px;width:30px;text-align:right;top:281px;font-size:12px;color:#000">13</div>
<div class="t" style="left:1477px;width:30px;text-align:right;top:281px;font-size:12px;color:#000">14</div>
<div class="t" style="left:1508px;width:30px;text-align:right;top:281px;font-size:12px;color:#000">15</div>
<div class="t" style="left:1539px;width:30px;text-align:right;top:281px;font-size:12px;color:#000">16</div>
<div class="t" style="left:1353px;width:30px;text-align:right;top:296px;font-size:12px;color:#000">17</div>
<div class="t" style="left:1384px;width:30px;text-align:right;top:296px;font-size:12px;color:#000">18</div>
<div class="a" style="left:1422px;top:294px;width:31px;height:15px;background:#cce8ff;border:1px solid #26a0da;outline:1px dotted #000;outline-offset:-2px"></div>
<div class="t" style="left:1415px;width:30px;text-align:right;top:296px;font-size:12px;color:#000">19</div>
<div class="t" style="left:1446px;width:30px;text-align:right;top:296px;font-size:12px;color:#000">20</div>
<div class="t" style="left:1477px;width:30px;text-align:right;top:296px;font-size:12px;color:#000">21</div>
<div class="t" style="left:1508px;width:30px;text-align:right;top:296px;font-size:12px;color:#000">22</div>
<div class="t" style="left:1539px;width:30px;text-align:right;top:296px;font-size:12px;color:#000">23</div>
<div class="t" style="left:1353px;width:30px;text-align:right;top:311px;font-size:12px;color:#000">24</div>
<div class="t" style="left:1384px;width:30px;text-align:right;top:311px;font-size:12px;color:#000">25</div>
<div class="t" style="left:1415px;width:30px;text-align:right;top:311px;font-size:12px;color:#000">26</div>
<div class="t" style="left:1446px;width:30px;text-align:right;top:311px;font-size:12px;color:#000">27</div>
<div class="t" style="left:1477px;width:30px;text-align:right;top:311px;font-size:12px;color:#000">28</div>
<div class="t" style="left:1508px;width:30px;text-align:right;top:311px;font-size:12px;color:#000">29</div>
<div class="t" style="left:1539px;width:30px;text-align:right;top:311px;font-size:12px;color:#000">30</div>
<div class="t" style="left:1353px;width:30px;text-align:right;top:326px;font-size:12px;color:#000">31</div>
<div class="t" style="left:1384px;width:30px;text-align:right;top:326px;font-size:12px;color:#808080">1</div>
<div class="t" style="left:1415px;width:30px;text-align:right;top:326px;font-size:12px;color:#808080">2</div>
<div class="t" style="left:1446px;width:30px;text-align:right;top:326px;font-size:12px;color:#808080">3</div>
<div class="t" style="left:1477px;width:30px;text-align:right;top:326px;font-size:12px;color:#808080">4</div>
<div class="t" style="left:1508px;width:30px;text-align:right;top:326px;font-size:12px;color:#808080">5</div>
<div class="t" style="left:1539px;width:30px;text-align:right;top:326px;font-size:12px;color:#808080">6</div>
<div class="a" style="left:1416px;top:341px;width:29px;height:13px;border:1px solid #0078d7;border-radius:2px"></div>
<div class="t" style="left:1450px;top:342px;font-size:12px;letter-spacing:-0.2px">Hoje: 19/12/2017</div>
<div class="a" style="left:1354px;top:391px;width:236px;height:1px;background:#a0a0a0"></div>
<div class="a" style="left:1588px;top:393px;width:1px;height:241px;background:#a0a0a0"></div>
<div class="t" style="left:1358px;top:396px;font-size:11px;color:#0a0a1a;letter-spacing:-0.2px">Lista de Espera</div>
<div class="a" style="left:1359px;top:408px;width:197px;height:21px;background:#e1e1e1;border:1px solid #adadad"></div>
<div class="t" style="left:1362px;top:414px;font-size:11px;letter-spacing:-0.2px">Lucas</div>
<svg class="a" style="left:1542px;top:416px" width="11" height="7"><path d="M1 1 L5.5 5.5 L10 1" stroke="#404040" stroke-width="1.1" fill="none"/></svg>
<svg class="a" style="left:1565px;top:410px" width="18" height="11"><defs><linearGradient id="tri" x1="0" y1="0" x2="0" y2="1"><stop offset="0" stop-color="#f0f0f0"/><stop offset="1" stop-color="#909090"/></linearGradient></defs><path d="M9 0.5 L17 10 L1 10Z" fill="url(#tri)"/></svg>
<div class="a" style="left:1355px;top:431px;width:234px;height:194px;border:1px solid #a0a0a0;border-top:2px solid #a0a0a0;background:#fff"></div>
<div class="a" style="left:1357px;top:434px;width:230px;height:17px;background:#b4c8dc"></div>
<div class="t" style="left:1402px;top:437px;font-size:12px;font-weight:bold;letter-spacing:-0.3px">Nome</div>
<div class="t" style="left:1512px;top:437px;font-size:12px;font-weight:bold;letter-spacing:-0.4px">Chegou</div>
<div class="a" style="left:1357px;top:451px;width:230px;height:1px;background:#000"></div>
<div class="a" style="left:1357px;top:452px;width:230px;height:18px;background:#4a8a9c"></div>
<div class="a" style="left:1357px;top:607px;width:230px;height:15px;background:#f0f0f0"></div>
<svg class="a" style="left:1361px;top:610px" width="8" height="10"><path d="M6 1 L2 5 L6 9" stroke="#505050" stroke-width="1.6" fill="none"/></svg>
<div class="a" style="left:1374px;top:607px;width:17px;height:15px;background:#cdcdcd"></div>
<svg class="a" style="left:1575px;top:610px" width="8" height="10"><path d="M2 1 L6 5 L2 9" stroke="#505050" stroke-width="1.6" fill="none"/></svg>
<div class="a" style="left:1354px;top:634px;width:236px;height:1px;background:#a0a0a0"></div>
<div class="a" style="left:1422px;top:636px;width:100px;height:8px;background:#f0f0f0;border:1px solid #909090"></div>
<svg class="a" style="left:1423px;top:637px" width="98" height="6"><path d="M6 1.8 L11.5 1.8 L8.75 5Z M87 1.8 L92.5 1.8 L89.75 5Z" fill="#000080"/><path d="M16 3.5 H84" stroke="#000080" stroke-width="1" stroke-dasharray="1 2"/></svg>
<div class="a" style="left:1355px;top:652px;width:234px;height:25px;border:1.5px solid #0a2a6a;border-radius:4px;background:linear-gradient(#ffffff,#f8f6f4 50%,#ebe6e0)"></div>
<div class="a" style="left:1355px;top:676px;width:234px;height:25px;border:1.5px solid #0a2a6a;border-radius:4px;background:linear-gradient(#ffffff,#f8f6f4 50%,#ebe6e0)"></div>
<div class="a" style="left:1355px;top:700px;width:234px;height:25px;border:1.5px solid #0a2a6a;border-radius:4px;background:linear-gradient(#ffffff,#f8f6f4 50%,#ebe6e0)"></div>
<div class="a" style="left:1355px;top:725px;width:234px;height:25px;border:1.5px solid #0a2a6a;border-radius:4px;background:linear-gradient(#ffffff,#f8f6f4 50%,#ebe6e0)"></div>
<div class="a" style="left:1355px;top:749px;width:234px;height:25px;border:1.5px solid #0a2a6a;border-radius:4px;background:linear-gradient(#ffffff,#f8f6f4 50%,#ebe6e0)"></div>
<svg class="a" style="left:1434px;top:655px" width="18" height="18" viewBox="0 0 18 18"><circle cx="11" cy="6.5" r="5" fill="#d8eefc" stroke="#7a8ab0" stroke-width="1.3"/><path d="M12 4 Q10 3.5 9 5" stroke="#fff" stroke-width="1" fill="none"/><path d="M7.5 10 L2 15.5" stroke="#e8902a" stroke-width="2.8" stroke-linecap="round"/></svg>
<div class="t" style="left:1454px;top:658px;font-size:12px;font-weight:bold;letter-spacing:-0.1px"><u>P</u>esquisar</div>
<svg class="a" style="left:1438px;top:679px" width="16" height="19" viewBox="0 0 16 19"><path d="M1 1 L11 1 L14.5 4.5 L14.5 18 L1 18Z" fill="#d8ecfa" stroke="#000" stroke-width="1.1"/><path d="M11 1 L11 4.5 L14.5 4.5Z" fill="#4a90e0"/><path d="M3 9.5 Q3.5 4.5 8.5 5 L8.5 3 L12 6.5 L8.5 9.5 L8.5 7.5 Q5.5 7.3 5.5 10Z" fill="#18a030"/><path d="M12.5 10 Q12 15 7 14.5 L7 16.5 L3.5 13 L7 10 L7 12 Q10 12.2 10 9.5Z" fill="#18a030"/></svg>
<div class="t" style="left:1456px;top:682px;font-size:12px;font-weight:bold;letter-spacing:0px"><u>A</u>tualizar</div>
<svg class="a" style="left:1413px;top:704px" width="16" height="18" viewBox="0 0 16 18"><circle cx="8" cy="10" r="6.3" fill="#f8f8f8" stroke="#909090" stroke-width="1.4"/><circle cx="3.5" cy="3" r="2.2" fill="#b0b0b0"/><circle cx="12.5" cy="3" r="2.2" fill="#b0b0b0"/><path d="M8 10 L8 6.5 M8 10 L10.5 11" stroke="#c03030" stroke-width="1"/><path d="M3.5 16 L2.5 17.5 M12.5 16 L13.5 17.5" stroke="#909090" stroke-width="1.2"/></svg>
<div class="t" style="left:1432px;top:707px;font-size:12px;font-weight:bold;letter-spacing:0px"><u>E</u>nviar Lembretes</div>
<svg class="a" style="left:1416px;top:731px" width="15" height="13" viewBox="0 0 15 13"><path d="M1.2 7 L5 11.2 L13.8 1.8" stroke="#104010" stroke-width="3.6" fill="none" stroke-linejoin="round" stroke-linecap="round"/><path d="M1.2 7 L5 11.2 L13.8 1.8" stroke="#20e020" stroke-width="2" fill="none" stroke-linejoin="round" stroke-linecap="round"/></svg>
<div class="t" style="left:1434px;top:732px;font-size:12px;font-weight:bold;letter-spacing:0px"><u>E</u>nviar por E-mail</div>
<svg class="a" style="left:1436px;top:752px" width="18" height="18" viewBox="0 0 18 18"><rect x="5" y="1" width="7" height="6" fill="#a8c8f0" stroke="#6a8ac0" stroke-width="0.6"/><path d="M1 9 Q1 6.5 4 6.5 L14 6.5 Q17 6.5 17 9 L17 13 L1 13Z" fill="#d8d8d8" stroke="#808080" stroke-width="0.8"/><path d="M1 13 L17 13 L16 16 L2 16Z" fill="#505050"/><rect x="4" y="10" width="10" height="1.5" fill="#303030"/></svg>
<div class="t" style="left:1456px;top:756px;font-size:12px;font-weight:bold;letter-spacing:0.1px"><u>I</u>mprimir</div>
<div class="a" style="left:1366px;top:780px;width:1px;height:3px;background:#b0b0b0"></div>
<div class="a" style="left:1577px;top:780px;width:1px;height:3px;background:#b0b0b0"></div>
<div class="a" style="left:1362px;top:787px;width:220px;height:15px;background:#e7eaea;border:1px solid #d6d6d6"></div>
<svg class="a" style="left:1455px;top:785px" width="11" height="17"><path d="M1 5 L5.5 1 L10 5 L10 16 L1 16Z" fill="#0078d7"/></svg>
<div class="a" style="left:1351px;top:812px;width:240px;height:2px;background:#a0a0a0"></div>
<div class="a" style="left:782px;top:380px;width:281px;height:291px;background:#f2f2f2;border:1px solid #cccccc;box-shadow:3px 3px 2px -0.5px rgba(0,0,0,0.36)"></div>
<div class="a" style="left:783px;top:381px;width:30px;height:288px;background:#f0f0f0"></div>
<div class="t" style="left:817px;top:388px;font-size:12px;letter-spacing:-0.12px">Abrir Paciente</div>
<div class="t" style="left:817px;top:410px;font-size:12px;letter-spacing:-0.12px">Editar Agenda</div>
<div class="t" style="left:817px;top:432px;font-size:12px;letter-spacing:-0.12px">Listar Agendamentos deste Paciente</div>
<div class="a" style="left:813px;top:452px;width:245px;height:1px;background:#d7d7d7"></div>
<div class="a" style="left:785px;top:456px;width:272px;height:22px;background:#91c9f7"></div>
<svg class="a" style="left:1046px;top:463px" width="6" height="9"><path d="M1 0.8 L4.8 4.5 L1 8.2" stroke="#333" stroke-width="1.1" fill="none"/></svg>
<div class="t" style="left:817px;top:461px;font-size:12px;letter-spacing:-0.12px">Alterar Status</div>
<div class="t" style="left:817px;top:483px;font-size:12px;letter-spacing:-0.12px">Enviar para lista de espera</div>
<div class="t" style="left:817px;top:505px;font-size:12px;letter-spacing:-0.12px">Remover Agendamento</div>
<div class="a" style="left:813px;top:525px;width:245px;height:1px;background:#d7d7d7"></div>
<div class="t" style="left:817px;top:534px;font-size:12px;letter-spacing:-0.12px">Copiar Agendamento</div>
<div class="t" style="left:817px;top:556px;font-size:12px;letter-spacing:-0.12px">Copiar para...</div>
<div class="t" style="left:817px;top:578px;font-size:12px;letter-spacing:-0.12px">Recortar Agendamento</div>
<div class="a" style="left:813px;top:598px;width:245px;height:1px;background:#d7d7d7"></div>
<div class="t" style="left:817px;top:607px;font-size:12px;letter-spacing:-0.12px">Enviar Email/SMS Paciente</div>
<div class="t" style="left:817px;top:629px;font-size:12px;letter-spacing:-0.12px">Enviar Lembrete de Consulta(Sms)</div>
<div class="t" style="left:817px;top:651px;font-size:12px;letter-spacing:-0.12px">Enviar Lembrete de Consulta(Email)</div>
<div class="a" style="left:1057px;top:453px;width:183px;height:204px;background:#f2f2f2;border:1px solid #cccccc;box-shadow:3px 3px 2px -0.5px rgba(0,0,0,0.36)"></div>
<div class="a" style="left:1059px;top:454px;width:30px;height:201px;background:#f0f0f0"></div>
<div class="t" style="left:1092px;top:461px;font-size:12px;letter-spacing:-0.15px">Agendado</div>
<div class="t" style="left:1092px;top:483px;font-size:12px;letter-spacing:-0.15px">Atendido</div>
<div class="a" style="left:1060px;top:500px;width:177px;height:22px;background:#91c9f7"></div>
<div class="t" style="left:1092px;top:505px;font-size:12px;letter-spacing:-0.15px">Confirmado</div>
<div class="t" style="left:1092px;top:527px;font-size:12px;letter-spacing:-0.15px">Confirmado SMS</div>
<div class="t" style="left:1092px;top:549px;font-size:12px;letter-spacing:-0.15px">Confirmado Web</div>
<div class="t" style="left:1092px;top:571px;font-size:12px;letter-spacing:-0.15px">Desmarcado SMS</div>
<div class="t" style="left:1092px;top:593px;font-size:12px;letter-spacing:-0.15px">Desmarcado Web</div>
<div class="t" style="left:1092px;top:615px;font-size:12px;letter-spacing:-0.15px">Faltou</div>
<div class="t" style="left:1092px;top:637px;font-size:12px;letter-spacing:-0.15px">Remarcado</div>

<!-- STATUS BAR -->
<div class="a" style="left:0;top:821px;width:1600px;height:21px;background:#f0f0f0;border-top:2px solid #fbfbfb;border-bottom:1px solid #d8d8d8"></div>
<div class="a" style="left:1px;top:824px;width:168px;height:17px;background:#cce4f7;border:1px solid #0c4f9c;border-bottom:none"></div>
<div class="t" style="left:63px;top:827px;font-size:13px">Agenda</div>

</body></html>
